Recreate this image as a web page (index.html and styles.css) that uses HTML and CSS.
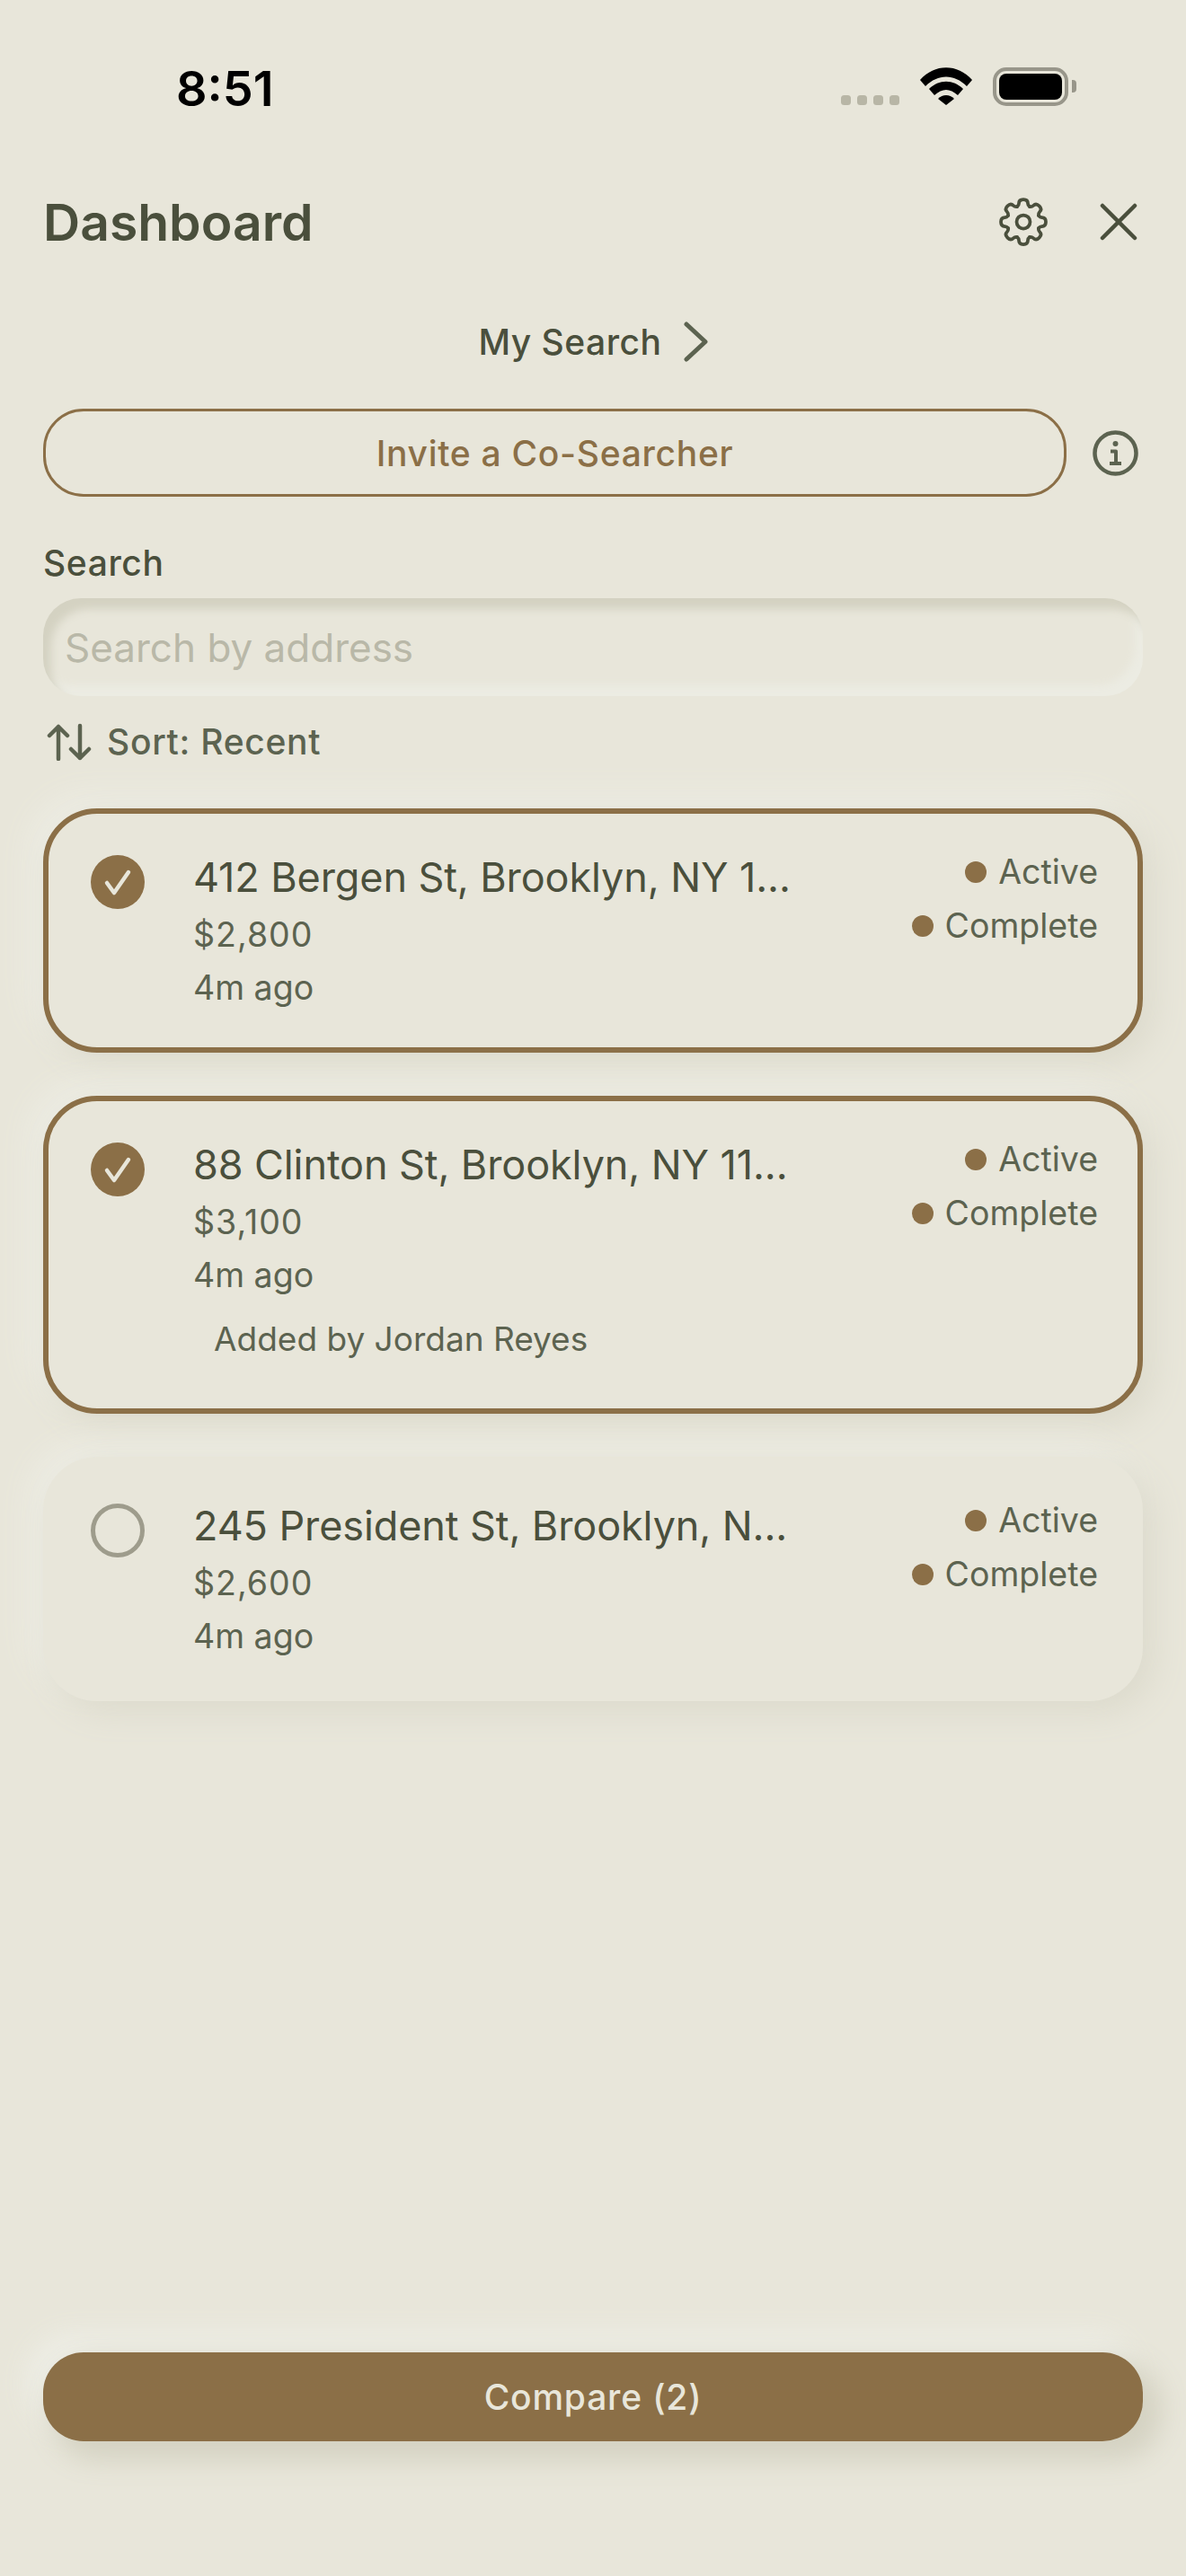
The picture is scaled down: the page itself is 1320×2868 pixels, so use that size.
FILE: index.html
```html
<!DOCTYPE html>
<html lang="en">
<head>
  <meta charset="UTF-8">
  <title>Dashboard</title>
  <meta name="viewport" content="width=device-width, initial-scale=1.0">
  <link rel="stylesheet" href="styles.css">
</head>
<body>
  <div class="screen">
    <div class="status-bar">
      <span class="time">8:51</span>
      <div class="status-icons">
        <div class="signal"><i></i><i></i><i></i><i></i></div>
        <svg class="wifi" width="58" height="42" viewBox="0 0 58 42">
          <path d="M0 14 C16 -4.5 42 -4.5 58 14 L52 21 C38 7 20 7 6 21 Z" fill="#000"/>
          <path d="M10 24 C21 13 37 13 48 24 L42 31 C33 23 25 23 16 31 Z" fill="#000"/>
          <path d="M20 35 C25 29.5 33 29.5 38 35 L29 42 Z" fill="#000"/>
        </svg>
        <div class="battery"><div class="battery-level"></div></div>
        <div class="battery-cap"></div>
      </div>
    </div>

    <div class="header">
      <h1>Dashboard</h1>
      <div class="header-icons">
        <svg class="gear" width="54" height="54" viewBox="-27 -27 54 54" fill="none" stroke="#4a4f3c" stroke-width="3.75" stroke-linecap="round" stroke-linejoin="round">
          <path id="tooth" d="M-6.9 -17 Q-5 -18.5 -5 -20.5 Q-5 -25 0 -25 Q5 -25 5 -20.5 Q5 -18.5 6.9 -17"/>
          <use href="#tooth" transform="rotate(45)"/>
          <use href="#tooth" transform="rotate(90)"/>
          <use href="#tooth" transform="rotate(135)"/>
          <use href="#tooth" transform="rotate(180)"/>
          <use href="#tooth" transform="rotate(225)"/>
          <use href="#tooth" transform="rotate(270)"/>
          <use href="#tooth" transform="rotate(315)"/>
          <circle cx="0" cy="0" r="7.5"/>
        </svg>
        <svg class="close" width="42" height="42" viewBox="0 0 42 42" fill="none" stroke="#4a4f3c" stroke-width="4.5" stroke-linecap="round">
          <path d="M3 3 L39 39 M39 3 L3 39"/>
        </svg>
      </div>
    </div>

    <div class="my-search">
      <span>My Search</span>
      <svg width="27" height="45" viewBox="0 0 27 45" fill="none" stroke="#5c6350" stroke-width="5" stroke-linecap="round" stroke-linejoin="round">
        <path d="M3 3 L24 22.5 L3 42"/>
      </svg>
    </div>

    <div class="invite-row">
      <button class="invite">Invite a Co-Searcher</button>
      <svg class="info" width="51" height="51" viewBox="0 0 51 51" fill="none" stroke="#5c6350" stroke-width="4.5" stroke-linejoin="round">
        <circle cx="25.5" cy="25.5" r="23"/>
        <path d="M20 23.5 H26 V37 M19 37 H32" stroke-width="4"/>
        <circle cx="25.5" cy="15" r="3" fill="#5c6350" stroke="none"/>
      </svg>
    </div>

    <div class="search-label">Search</div>
    <div class="search-box">Search by address</div>

    <div class="sort">
      <svg width="50" height="42" viewBox="0 0 50 42" fill="none" stroke="#5c6350" stroke-width="4.5" stroke-linecap="round" stroke-linejoin="round">
        <path d="M13 40 V4 M3 14 L13 4 L23 14 M37 3 V39 M27 29 L37 39 L47 29"/>
      </svg>
      <span>Sort: Recent</span>
    </div>

    <div class="cards">
      <div class="card selected">
        <div class="check checked">
          <svg width="60" height="60" viewBox="0 0 60 60" fill="none" stroke="#e8e6da" stroke-width="4.5" stroke-linecap="round" stroke-linejoin="round"><path d="M18 31 L26 42 L42 19"/></svg>
        </div>
        <div class="card-main">
          <div class="card-address">412 Bergen St, Brooklyn, NY 1...</div>
          <div class="card-price">$2,800</div>
          <div class="card-time">4m ago</div>
        </div>
        <div class="card-tags">
          <div class="tag"><i></i>Active</div>
          <div class="tag"><i></i>Complete</div>
        </div>
      </div>

      <div class="card selected">
        <div class="check checked">
          <svg width="60" height="60" viewBox="0 0 60 60" fill="none" stroke="#e8e6da" stroke-width="4.5" stroke-linecap="round" stroke-linejoin="round"><path d="M18 31 L26 42 L42 19"/></svg>
        </div>
        <div class="card-main">
          <div class="card-address">88 Clinton St, Brooklyn, NY 11...</div>
          <div class="card-price">$3,100</div>
          <div class="card-time">4m ago</div>
          <div class="card-added">Added by Jordan Reyes</div>
        </div>
        <div class="card-tags">
          <div class="tag"><i></i>Active</div>
          <div class="tag"><i></i>Complete</div>
        </div>
      </div>

      <div class="card">
        <div class="check"></div>
        <div class="card-main">
          <div class="card-address">245 President St, Brooklyn, N...</div>
          <div class="card-price">$2,600</div>
          <div class="card-time">4m ago</div>
        </div>
        <div class="card-tags">
          <div class="tag"><i></i>Active</div>
          <div class="tag"><i></i>Complete</div>
        </div>
      </div>
    </div>

    <button class="compare">Compare (2)</button>
  </div>
</body>
</html>
```

FILE: styles.css
```css
* { box-sizing: border-box; margin: 0; padding: 0; }
body {
  font-family: 'Inter', 'Liberation Sans', sans-serif;
  background: #e8e6da;
  color: #4a4f3c;
  width: 1320px;
  height: 2868px;
  overflow: hidden;
}
.screen {
  height: 2868px;
  padding: 0 48px;
  display: flex;
  flex-direction: column;
}

/* Status bar */
.status-bar {
  height: 184px;
  padding-top: 72px;
  display: flex;
  justify-content: space-between;
  align-items: flex-start;
}
.time {
  margin-left: 148px;
  font-size: 54px;
  line-height: 54px;
  font-weight: 600;
  color: #000;
}
.status-icons {
  display: flex;
  align-items: flex-start;
  margin-right: 74px;
  margin-top: 3px;
}
.signal {
  display: flex;
  gap: 7px;
  margin-top: 31px;
  margin-right: 23px;
}
.signal i {
  width: 11px;
  height: 11px;
  border-radius: 3.5px;
  background: #b8b6a6;
}
.wifi { margin-right: 23px; }
.battery {
  width: 84px;
  height: 43px;
  border: 4px solid #98968a;
  border-radius: 15px;
  padding: 3px;
}
.battery-level {
  height: 100%;
  background: #000;
  border-radius: 8px;
}
.battery-cap {
  width: 5px;
  height: 14px;
  margin-top: 14px;
  margin-left: 4px;
  background: #98968a;
  border-radius: 0 4px 4px 0;
}

/* Header */
.header {
  height: 126px;
  display: flex;
  justify-content: space-between;
  align-items: center;
}
.header h1 {
  font-size: 57px;
  font-weight: 600;
  color: #4a4f3c;
}
.header-icons {
  display: flex;
  align-items: center;
  gap: 58px;
  margin-right: 6px;
}

.my-search {
  height: 78px;
  margin-top: 31px;
  display: flex;
  justify-content: center;
  align-items: center;
  gap: 24px;
  font-size: 39px;
  letter-spacing: 0.5px;
  font-weight: 500;
}

.invite-row {
  margin-top: 36px;
  display: flex;
  align-items: center;
  gap: 29px;
}
.invite {
  width: 1139px;
  height: 98px;
  border: 3px solid #8b6f47;
  border-radius: 45px;
  background: transparent;
  color: #8b6f47;
  font-family: inherit;
  font-size: 39px;
  letter-spacing: 0.7px;
  font-weight: 500;
}
.search-label {
  margin-top: 50px;
  font-size: 39px;
  letter-spacing: 0.6px;
  line-height: 48px;
  font-weight: 500;
}
.search-box {
  margin-top: 15px;
  height: 109px;
  border-radius: 42px;
  padding: 0 24px;
  display: flex;
  align-items: center;
  font-size: 44px;
  color: #b9b8a8;
  box-shadow: inset 9px 12px 10px #d4d2c2, inset -9px -12px 10px #ecece3;
}
.sort {
  margin-top: 27px;
  display: flex;
  align-items: center;
  gap: 17px;
  font-size: 39px;
  letter-spacing: 0.7px;
  font-weight: 500;
  color: #5c6350;
  padding-left: 4px;
}

/* Cards */
.cards {
  margin-top: 51px;
  display: flex;
  flex-direction: column;
  gap: 48px;
}
.card {
  padding: 41px 44px 37px 47px;
  border: 6px solid transparent;
  border-radius: 60px;
  display: flex;
  align-items: flex-start;
  box-shadow: 12px 12px 36px #dcdacc, -12px -12px 36px #eeeee6;
}
.card.selected {
  border-color: #8b6f47;
}
.check {
  width: 60px;
  height: 60px;
  flex-shrink: 0;
  margin-top: 5px;
  border-radius: 50%;
  border: 5px solid #9e9c8c;
}
.check.checked {
  border: none;
  background: #8b6f47;
}
.card-main {
  margin-left: 54px;
}
.card-address {
  font-size: 45px;
  letter-spacing: -0.1px;
  line-height: 60px;
  white-space: nowrap;
}
.card-price {
  margin-top: 4px;
  font-size: 37.5px;
  letter-spacing: 1px;
  line-height: 60px;
  color: #5c6350;
}
.card-time {
  font-size: 37.5px;
  line-height: 58px;
  color: #5c6350;
}
.card-added {
  margin: 12px 0 10px;
  padding-left: 23px;
  font-size: 37px;
  line-height: 60px;
  color: #5c6350;
}
.card-tags {
  margin-left: auto;
  display: flex;
  flex-direction: column;
  align-items: flex-end;
  gap: 13px;
}
.tag {
  display: flex;
  align-items: center;
  gap: 13px;
  font-size: 37.5px;
  line-height: 47px;
  color: #5c6350;
}
.tag i {
  width: 24px;
  height: 24px;
  border-radius: 50%;
  background: #8b6f47;
}

/* Compare button */
.compare {
  margin-top: auto;
  margin-bottom: 150px;
  height: 99px;
  border: none;
  border-radius: 45px;
  background: #8b6f47;
  color: #e8e6da;
  font-family: inherit;
  font-size: 39px;
  letter-spacing: 0.8px;
  font-weight: 500;
  box-shadow: 15px 15px 30px 6px #d4d2c2, -12px -15px 30px 6px #eeeee6;
}
```
